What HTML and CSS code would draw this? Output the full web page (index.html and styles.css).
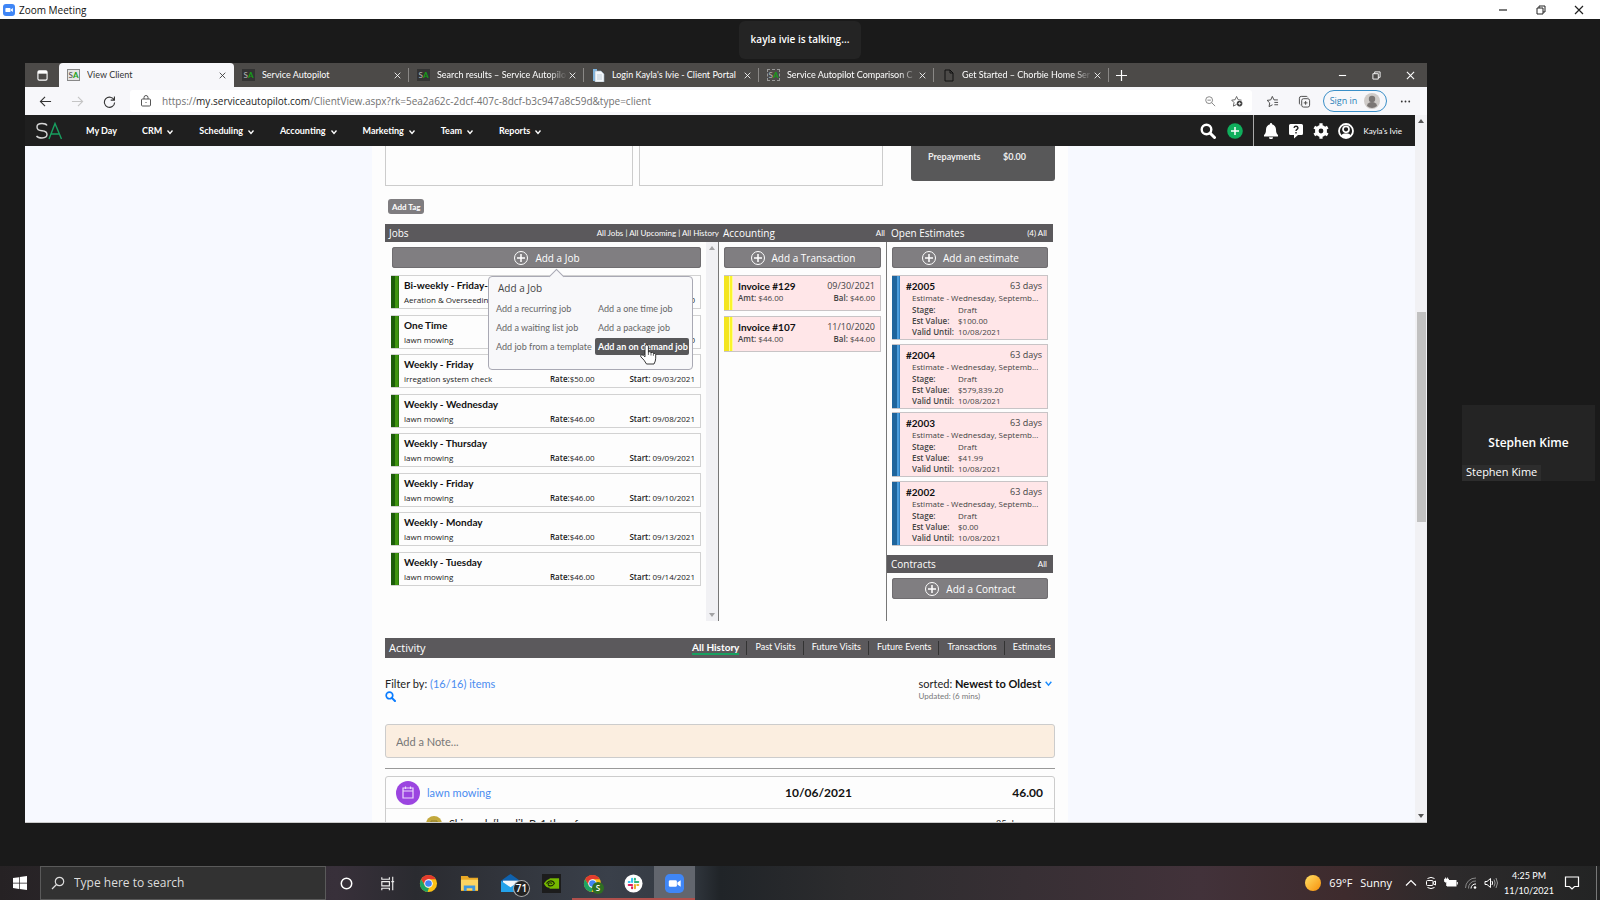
FILE: index.html
```html
<!DOCTYPE html>
<html lang="en">
<head>
<meta charset="utf-8">
<title>Zoom Meeting</title>
<link rel="stylesheet" href="styles.css">
</head>
<body>
<svg class="defs" aria-hidden="true">
  <symbol id="i-close" viewBox="0 0 10 10"><path d="M1 1l8 8M9 1l-8 8" fill="none" stroke="currentColor" stroke-width="1.2"/></symbol>
  <symbol id="i-min" viewBox="0 0 10 10"><path d="M1 5h8" fill="none" stroke="currentColor" stroke-width="1.2"/></symbol>
  <symbol id="i-restore" viewBox="0 0 10 10"><path d="M1 3h6v6H1zM3 3V1h6v6H7" fill="none" stroke="currentColor"/></symbol>
  <symbol id="i-chev" viewBox="0 0 8 8"><path d="M1.500 2.500L4 5.500l2.500-3" fill="none" stroke="currentColor" stroke-width="1.300"/></symbol>
  <symbol id="i-pluscircle" viewBox="0 0 16 16"><circle cx="8" cy="8" r="6.500" fill="none" stroke="currentColor"/><path d="M8 4v8M4 8h8" stroke="currentColor" stroke-width="1.500"/></symbol>
  <symbol id="i-search" viewBox="0 0 16 16"><circle cx="6.500" cy="6.500" r="4.800" fill="none" stroke="currentColor" stroke-width="2.400"/><path d="M10 10l4.500 4.500" stroke="currentColor" stroke-width="3" stroke-linecap="round"/></symbol>
  <symbol id="i-chrome" viewBox="0 0 20 20"><circle cx="10" cy="10" r="9" fill="#fbc116"/><path d="M2.200 5.500A9 9 0 0 1 17.800 5.500H10L6.100 12.200z" fill="#e33b2e"/><path d="M2.200 5.500L6.100 12.200Q8 14.800 10.500 14.500L9 19A9 9 0 0 1 2.200 5.500z" fill="#1da462"/><circle cx="10" cy="10" r="4.500" fill="#fff"/><circle cx="10" cy="10" r="3.500" fill="#4285f4"/></symbol>
  <symbol id="i-zoom" viewBox="0 0 20 20"><rect width="20" height="20" rx="5" fill="#3f86f6"/><rect x="4" y="6.500" width="8.500" height="7" rx="1.500" fill="#fff"/><path d="M13 9l3.500-2.500v7L13 11z" fill="#fff"/></symbol>
</svg>

<header class="titlebar">
  <svg class="s12"><use href="#i-zoom"/></svg>
  <h1>Zoom Meeting</h1>
  <div class="wincontrols">
    <button aria-label="Minimize"><svg><use href="#i-min"/></svg></button>
    <button aria-label="Restore"><svg><use href="#i-restore"/></svg></button>
    <button aria-label="Close"><svg><use href="#i-close"/></svg></button>
  </div>
</header>

<div class="talking"><span>kayla ivie is talking...</span></div>

<div class="meeting">
<main class="browser">
  <div class="tabs">
    <button class="tabmenu" aria-label="Tab actions"><svg viewBox="0 0 12 12"><rect x="1" y="1" width="10" height="10" rx="1.500" fill="none" stroke="#fff" stroke-width="1.200"/><path d="M1 1h10v3H1z" fill="#fff"/></svg></button>
    <div class="tab active"><span class="fav box">S<b>A</b></span><span class="tt">View Client</span><button aria-label="Close tab"><svg><use href="#i-close"/></svg></button></div>
    <div class="tab"><span class="fav">S<b>A</b></span><span class="tt">Service Autopilot</span><button aria-label="Close tab"><svg><use href="#i-close"/></svg></button></div>
    <div class="tab"><span class="fav">S<b>A</b></span><span class="tt fade">Search results – Service Autopilo</span><button aria-label="Close tab"><svg><use href="#i-close"/></svg></button></div>
    <div class="tab"><svg class="favsvg" viewBox="0 0 13 13"><path d="M1 0h4v12H1z" fill="#7fb5e0"/><path d="M3 2h6l3 3v8H3z" fill="#f4f7fa" stroke="#9fb4c6" stroke-width=".6"/><path d="M5 6h5M5 8h5M5 10h5" stroke="#a9bccc" stroke-width=".7"/></svg><span class="tt">Login Kayla's Ivie - Client Portal</span><button aria-label="Close tab"><svg><use href="#i-close"/></svg></button></div>
    <div class="tab"><span class="fav dash">S<b>A</b></span><span class="tt fade">Service Autopilot Comparison C</span><button aria-label="Close tab"><svg><use href="#i-close"/></svg></button></div>
    <div class="tab"><svg class="favsvg" viewBox="0 0 13 13"><path d="M3 1h5l3 3v8H3zM8 1v3h3" fill="none" stroke="#111"/></svg><span class="tt fade">Get Started – Chorbie Home Ser</span><button aria-label="Close tab"><svg><use href="#i-close"/></svg></button></div>
    <button class="newtab" aria-label="New tab"><svg viewBox="0 0 10 10"><path d="M5 0v10M0 5h10" stroke="#fff" stroke-width="1.100"/></svg></button>
    <div class="wincontrols light">
      <button aria-label="Minimize"><svg><use href="#i-min"/></svg></button>
      <button aria-label="Restore"><svg><use href="#i-restore"/></svg></button>
      <button aria-label="Close"><svg><use href="#i-close"/></svg></button>
    </div>
  </div>

  <div class="toolbar">
    <button aria-label="Back"><svg viewBox="0 0 14 14"><path d="M13 7H1.500M6.500 2l-5 5 5 5" fill="none" stroke="#333" stroke-width="1.200"/></svg></button>
    <button aria-label="Forward"><svg viewBox="0 0 14 14"><path d="M1 7h11.500M7.500 2l5 5-5 5" fill="none" stroke="#c5c5c5" stroke-width="1.200"/></svg></button>
    <button aria-label="Refresh"><svg viewBox="0 0 14 14"><path d="M12 5.500A5.500 5.500 0 1 0 12.500 8M12.300 1.500v4h-4" fill="none" stroke="#333" stroke-width="1.200"/></svg></button>
    <div class="address">
      <svg viewBox="0 0 12 12"><rect x="1.500" y="4" width="9" height="7" rx="1" fill="none" stroke="#555"/><path d="M4 4V2.500a2 2 0 0 1 4 0V4M6 7v1" fill="none" stroke="#555"/></svg>
      <span class="url">https://<b>my.serviceautopilot.com</b>/ClientView.aspx?rk=5ea2a62c-2dcf-407c-8dcf-b3c947a8c59d&amp;type=client</span>
      <button aria-label="Zoom out"><svg viewBox="0 0 14 14"><circle cx="6" cy="6" r="4" fill="none" stroke="#777"/><path d="M9 9l4 4M4 6h4" stroke="#777"/></svg></button>
      <button aria-label="Add favorite"><svg viewBox="0 0 14 14"><path d="M6.500 11l-3.700 2 .7-4.200L.8 6l4-.5L6.500 1.700 8.300 5.500l4 .5" fill="none" stroke="#555"/><circle cx="10" cy="10" r="3.300" fill="#444"/><path d="M10 8.200v3.600M8.200 10h3.600" stroke="#fff" stroke-width=".8"/></svg></button>
    </div>
    <button aria-label="Favorites"><svg viewBox="0 0 14 14"><path d="M7 10.500l-3.700 2 .7-4L1.200 5.800l3.900-.5L6.800 1.500l1.800 3.800h4.200M9 8h4M9 10.500h4" fill="none" stroke="#444"/></svg></button>
    <button aria-label="Collections"><svg viewBox="0 0 14 14"><rect x="4" y="4" width="8.500" height="9" rx="2" fill="none" stroke="#444"/><path d="M2.500 10.500A2 2 0 0 1 1.500 9V3.500a2 2 0 0 1 2-2H9a2 2 0 0 1 1.500 1M8.200 6.500v4M6.200 8.500h4" fill="none" stroke="#444"/></svg></button>
    <button class="signin">Sign in<svg viewBox="0 0 16 16"><circle cx="8" cy="8" r="8" fill="#cfcbc8"/><circle cx="8" cy="6" r="3.200" fill="#7b7674"/><path d="M3 13a5 4 0 0 1 10 0q-5 4-10 0z" fill="#7b7674"/></svg></button>
    <button aria-label="Settings and more"><svg viewBox="0 0 14 14"><circle cx="3" cy="7" r="1" fill="#333"/><circle cx="7" cy="7" r="1" fill="#333"/><circle cx="11" cy="7" r="1" fill="#333"/></svg></button>
  </div>

  <div class="viewport">
    <div class="site">
      <nav class="nav">
        <svg class="logo" viewBox="0 0 28 18"><path d="M12 3.500Q11 1.500 7 1.500 2 1.500 2 5T7 8.800Q12 9.200 12 12.500T7 16Q3 16 1.500 14" fill="none" stroke="#d7d7d7" stroke-width="1.400"/><path d="M14 17L20 1.500 26.500 17M16 12h8.500" fill="none" stroke="#18a060" stroke-width="1.400"/></svg>
        <a href="#">My Day</a>
        <a href="#">CRM<svg><use href="#i-chev"/></svg></a>
        <a href="#">Scheduling<svg><use href="#i-chev"/></svg></a>
        <a href="#">Accounting<svg><use href="#i-chev"/></svg></a>
        <a href="#">Marketing<svg><use href="#i-chev"/></svg></a>
        <a href="#">Team<svg><use href="#i-chev"/></svg></a>
        <a href="#">Reports<svg><use href="#i-chev"/></svg></a>
        <div class="actions">
          <button aria-label="Search"><svg><use href="#i-search"/></svg></button>
          <button aria-label="Add"><svg viewBox="0 0 16 16"><circle cx="8" cy="8" r="7.800" fill="#0fae5c"/><path d="M8 4v8M4 8h8" stroke="#fff" stroke-width="1.500"/></svg></button>
        </div>
        <div class="user">
          <button aria-label="Notifications"><svg viewBox="0 0 16 16"><path d="M8 0a1 1 0 0 1 1 1.200C11.500 1.800 13 4 13 6.500c0 3.500 1 4.500 2 5.500v1.500H1V12c1-1 2-2 2-5.500C3 4 4.500 1.800 7 1.200A1 1 0 0 1 8 0zM6 14.300h4a2 2 0 0 1-4 0z" fill="#fff"/></svg></button>
          <button aria-label="Help"><svg viewBox="0 0 16 16"><path d="M2.500 1h11A1.500 1.500 0 0 1 15 2.500v8a1.500 1.500 0 0 1-1.500 1.500H10l-4 3.500V12H2.500A1.500 1.500 0 0 1 1 10.500v-8A1.500 1.500 0 0 1 2.500 1z" fill="#fff"/><path d="M6 4.800q.3-1.500 2-1.500t2 1.500q0 1-1 1.600T8 8M8 9v1.500" fill="none" stroke="#1f1f1f" stroke-width="1.400"/></svg></button>
          <button aria-label="Settings"><svg viewBox="0 0 16 16"><circle cx="8" cy="8" r="4.200" fill="none" stroke="#fff" stroke-width="3.600"/><path d="M8 .3v3M8 12.700v3M1.300 4.200l2.600 1.500M12.100 10.300l2.600 1.500M1.300 11.800l2.600-1.500M12.100 5.700l2.600-1.500" stroke="#fff" stroke-width="3.200"/></svg></button>
          <button aria-label="Account"><svg viewBox="0 0 16 16"><circle cx="8" cy="8" r="7" fill="none" stroke="#fff" stroke-width="1.800"/><circle cx="8" cy="6.300" r="3" fill="none" stroke="#fff" stroke-width="1.700"/><path d="M3 13q1-2.500 3-2.500h4q2 0 3 2.500-5 3.500-10 0z" fill="#fff"/></svg></button>
          <span>Kayla's Ivie</span>
        </div>
      </nav>

      <div class="page">
        <div class="content">
          <div class="summary">
            <div class="box1"></div><div class="box2"></div>
            <div class="balance"><b>Prepayments</b><b>$0.00</b></div>
          </div>
          <button class="tag">Add Tag</button>

          <div class="cols">
            <section class="jobs">
              <header class="bar"><h2>Jobs</h2><span><a href="#">All Jobs</a> | <a href="#">All Upcoming</a> | <a href="#">All History</a></span></header>
              <div class="jobbody">
                <div class="joblist">
                  <div class="addwrap">
                    <button class="add"><svg><use href="#i-pluscircle"/></svg>Add a Job</button>
                    <div class="popup">
                      <h3>Add a Job</h3>
                      <a href="#">Add a recurring job</a><a href="#">Add a one time job</a>
                      <a href="#">Add a waiting list job</a><a href="#">Add a package job</a>
                      <a href="#">Add job from a template</a><a href="#" class="hot">Add an on demand job</a>
                      <svg class="hand" viewBox="0 0 18 22"><path d="M6 13V3.500a1.700 1.700 0 0 1 3.400 0V9q1.600-1 2.600.6 1.600-.8 2.400.8 2-.5 2.300 1.200v3.600q0 2.800-1.700 5.800H7.500Q5.500 17 1.800 13.800q-.8-1.800 1-2 1.600.1 3.200 2z" fill="#fff" stroke="#222" stroke-width=".9"/><path d="M9.400 9v3M12 9.800V12.500M14.400 10.600v2.200" stroke="#222" stroke-width=".7"/></svg>
                    </div>
                  </div>
                  <div class="cards">
                    <article class="job"><h4>Bi-weekly - Friday-</h4><p>Aeration &amp; Overseeding</p><p></p><p>0</p></article>
                    <article class="job"><h4>One Time</h4><p>lawn mowing</p><p></p><p>0</p></article>
                    <article class="job"><h4>Weekly - Friday</h4><p>irregation system check</p><p><b>Rate:</b>$50.00</p><p><b>Start:</b> 09/03/2021</p></article>
                    <article class="job"><h4>Weekly - Wednesday</h4><p>lawn mowing</p><p><b>Rate:</b>$46.00</p><p><b>Start:</b> 09/08/2021</p></article>
                    <article class="job"><h4>Weekly - Thursday</h4><p>lawn mowing</p><p><b>Rate:</b>$46.00</p><p><b>Start:</b> 09/09/2021</p></article>
                    <article class="job"><h4>Weekly - Friday</h4><p>lawn mowing</p><p><b>Rate:</b>$46.00</p><p><b>Start:</b> 09/10/2021</p></article>
                    <article class="job"><h4>Weekly - Monday</h4><p>lawn mowing</p><p><b>Rate:</b>$46.00</p><p><b>Start:</b> 09/13/2021</p></article>
                    <article class="job"><h4>Weekly - Tuesday</h4><p>lawn mowing</p><p><b>Rate:</b>$46.00</p><p><b>Start:</b> 09/14/2021</p></article>
                  </div>
                </div>
                <div class="minibar"><i class="up"></i><i class="down"></i></div>
              </div>
            </section>

            <section class="acct">
              <header class="bar"><h2>Accounting</h2><a href="#">All</a></header>
              <div class="colbody">
                <button class="add"><svg><use href="#i-pluscircle"/></svg>Add a Transaction</button>
                <article class="inv"><h4>Invoice #129</h4><span>09/30/2021</span><p><b>Amt:</b> $46.00</p><p><b>Bal:</b> $46.00</p></article>
                <article class="inv"><h4>Invoice #107</h4><span>11/10/2020</span><p><b>Amt:</b> $44.00</p><p><b>Bal:</b> $44.00</p></article>
              </div>
            </section>

            <section class="ests">
              <header class="bar"><h2>Open Estimates</h2><a href="#">(4) All</a></header>
              <div class="colbody">
                <button class="add"><svg><use href="#i-pluscircle"/></svg>Add an estimate</button>
                <div class="estlist">
                  <article class="est"><h4>#2005</h4><span>63 days</span><p>Estimate - Wednesday, Septemb...</p><dl><dt>Stage:</dt><dd>Draft</dd><dt>Est Value:</dt><dd>$100.00</dd><dt>Valid Until:</dt><dd>10/08/2021</dd></dl></article>
                  <article class="est"><h4>#2004</h4><span>63 days</span><p>Estimate - Wednesday, Septemb...</p><dl><dt>Stage:</dt><dd>Draft</dd><dt>Est Value:</dt><dd>$579,839.20</dd><dt>Valid Until:</dt><dd>10/08/2021</dd></dl></article>
                  <article class="est"><h4>#2003</h4><span>63 days</span><p>Estimate - Wednesday, Septemb...</p><dl><dt>Stage:</dt><dd>Draft</dd><dt>Est Value:</dt><dd>$41.99</dd><dt>Valid Until:</dt><dd>10/08/2021</dd></dl></article>
                  <article class="est"><h4>#2002</h4><span>63 days</span><p>Estimate - Wednesday, Septemb...</p><dl><dt>Stage:</dt><dd>Draft</dd><dt>Est Value:</dt><dd>$0.00</dd><dt>Valid Until:</dt><dd>10/08/2021</dd></dl></article>
                </div>
              </div>
              <header class="bar"><h2>Contracts</h2><a href="#">All</a></header>
              <div class="colbody"><button class="add"><svg><use href="#i-pluscircle"/></svg>Add a Contract</button></div>
            </section>
          </div>

          <section class="activity">
            <header class="bar"><h2>Activity</h2>
              <div class="filters"><a href="#" class="on">All History</a><a href="#">Past Visits</a><a href="#">Future Visits</a><a href="#">Future Events</a><a href="#">Transactions</a><a href="#">Estimates</a></div>
            </header>
            <div class="filterrow">
              <div>Filter by: <a href="#">(16/16) items</a><button aria-label="Search activity"><svg><use href="#i-search"/></svg></button></div>
              <div class="sort">sorted: <b>Newest to Oldest</b><svg><use href="#i-chev"/></svg><small>Updated: (6 mins)</small></div>
            </div>
            <input class="note" type="text" placeholder="Add a Note..." aria-label="Add a Note">
            <hr>
            <div class="entry">
              <div class="entryhead">
                <svg viewBox="0 0 24 24"><circle cx="12" cy="12" r="12" fill="#9b45e0"/><path d="M7 7h10v10H7zM7 10h10M9.500 5.500V8M14.500 5.500V8" fill="none" stroke="#ecd9fb" stroke-width="1.200"/></svg>
                <a href="#">lawn mowing</a><b>10/06/2021</b><b>46.00</b>
              </div>
              <div class="entrybody">
                <svg viewBox="0 0 16 16"><circle cx="8" cy="8" r="8" fill="#c2a83c"/><path d="M5 5h6v7H5zM5 7h6" fill="none" stroke="#8a7a30"/></svg>
                <span>Skipped: [hardik B-1 then f</span><small>35 days ago</small>
              </div>
            </div>
          </section>
        </div>
      </div>
    </div>
    <div class="scrollbar"><i class="up"></i><i class="thumb"></i><i class="down"></i></div>
  </div>
</main>

<aside class="side"><div class="participant"><b>Stephen Kime</b><span>Stephen Kime</span></div></aside>
</div>

<footer class="taskbar">
  <button class="start" aria-label="Start"><svg viewBox="0 0 14 14"><path d="M0 2l6-.8v5.500H0zM6.700 1.100L14 0v6.700H6.700zM0 7.400h6v5.500L0 12zM6.700 7.400H14V14l-7.300-1z" fill="#fff"/></svg></button>
  <label class="search"><svg viewBox="0 0 14 14"><circle cx="8.500" cy="5.500" r="4.200" fill="none" stroke="#ddd" stroke-width="1.200"/><path d="M5.500 8.500L1 13" stroke="#ddd" stroke-width="1.200"/></svg><input type="text" placeholder="Type here to search" aria-label="Type here to search"></label>
  <button aria-label="Cortana"><svg viewBox="0 0 20 20"><circle cx="10" cy="10" r="5.500" fill="none" stroke="#fff" stroke-width="1.600"/></svg></button>
  <button aria-label="Task View"><svg viewBox="0 0 20 20"><path d="M4 3.500v2h8v-2M4 8h8v4.500H4zM4 17v-2h8v2M15.500 3v14M14 8h3" fill="none" stroke="#eee" stroke-width="1.200"/></svg></button>
  <button aria-label="Chrome"><svg><use href="#i-chrome"/></svg></button>
  <button aria-label="File Explorer"><svg viewBox="0 0 20 20"><path d="M1 2h7l1.500 2H19v14H1z" fill="#e9a825"/><path d="M1 6h18v11H1z" fill="#fcd462"/><path d="M4 18v-6h12v6h-3v-3H7v3z" fill="#3f97dd"/></svg></button>
  <button aria-label="Mail"><svg viewBox="0 0 20 20"><path d="M0 7l10-7 10 7v12H0z" fill="#0f62ae"/><path d="M2 7h16v8H2z" fill="#f3f7fb"/><path d="M0 7l10 7 10-7v12H0z" fill="#24a2ea"/></svg><span class="count">71</span></button>
  <button aria-label="NVIDIA"><svg viewBox="0 0 20 20"><path d="M0 0h20v20H0z" fill="#1c1c1c"/><path d="M8 4.500h10v11H8z" fill="#76b900"/><path d="M2 10q4-5.500 8-4.500 4 .8 5 4.500-3 4.500-7 4.500T2 10z" fill="#76b900"/><path d="M4.500 10q3-3.500 6-2.500 2 .7 2.500 2.500-2 3-4.500 2.500T6.500 10q2-1.500 4 0" fill="none" stroke="#1c2a05" stroke-width="1.200"/></svg></button>
  <button class="run" aria-label="Chrome, signed in"><svg><use href="#i-chrome"/></svg><span class="profile">S</span></button>
  <button class="run" aria-label="Slack"><svg viewBox="0 0 20 20"><circle cx="10" cy="10" r="9.500" fill="#fff"/><g stroke-width="2.200" stroke-linecap="round"><path d="M8.500 5v3.500M5 8.500h1" stroke="#36c5f0"/><path d="M11.500 8.500H15M11.500 5v1" stroke="#2eb67d"/><path d="M11.500 11.500V15M15 11.500h-1" stroke="#ecb22e"/><path d="M8.500 11.500H5M8.500 15v-1" stroke="#e01e5a"/></g></svg></button>
  <button class="run current" aria-label="Zoom"><svg><use href="#i-zoom"/></svg></button>
  <div class="tray">
    <button class="weather"><svg viewBox="0 0 16 16"><defs><linearGradient id="sun" x1="0" y1="0" x2="1" y2="1"><stop offset="0" stop-color="#ffe066"/><stop offset="1" stop-color="#f78f0a"/></linearGradient></defs><circle cx="8" cy="8" r="8" fill="url(#sun)"/></svg><span>69°F</span><span>Sunny</span></button>
    <button aria-label="Show hidden icons"><svg viewBox="0 0 14 14"><path d="M2 9.500l5-5 5 5" fill="none" stroke="#fff" stroke-width="1.200"/></svg></button>
    <button aria-label="Meet now"><svg viewBox="0 0 14 14"><rect x="2.500" y="4.500" width="6.500" height="5" rx="1" fill="none" stroke="#fff"/><path d="M9 6.500l2.500-1.500v4L9 7.500M3.500 2.500Q7 .3 10.500 2.500M3.500 11.500Q7 13.700 10.500 11.500" fill="none" stroke="#fff"/></svg></button>
    <button aria-label="Battery"><svg viewBox="0 0 14 14"><path d="M3 4h9.500v6.500H3z" fill="#fff"/><path d="M13.300 6v2.500" stroke="#fff"/><path d="M.5 3h4v2.500q-2 2-4 0zM1.500 3V1.500M3.500 3V1.500M2.500 7v3" fill="#fff" stroke="#fff" stroke-width=".8"/></svg></button>
    <button aria-label="Network"><svg viewBox="0 0 14 14"><path d="M1.500 12A10 10 0 0 1 12 2M4.500 12.500A7 7 0 0 1 12 5" fill="none" stroke="#888"/><path d="M7 12.500a4.500 4.500 0 0 1 5-4.500" fill="none" stroke="#fff"/><circle cx="11" cy="11.500" r="1.300" fill="#fff"/></svg></button>
    <button aria-label="Volume"><svg viewBox="0 0 14 14"><path d="M1 5.500h2L6.500 2.500v9L3 8.500H1z" fill="none" stroke="#fff"/><path d="M8 5q1.200 2 0 4" fill="none" stroke="#fff"/><path d="M10 3.500q2.200 3.500 0 7M12 2q3 5 0 10" fill="none" stroke="#999"/></svg></button>
    <div class="clock"><time>4:25 PM</time><time>11/10/2021</time></div>
    <button class="notif" aria-label="Notifications"><svg viewBox="0 0 16 16"><path d="M1.500 2h13v9.500H10.500L8 14l-2.500-2.500h-4z" fill="none" stroke="#fff" stroke-width="1.200"/></svg></button>
  </div>
</footer>
</body>
</html>
```
FILE: styles.css
```css
* { box-sizing: border-box; }
body {
  margin: 0;
  height: 100vh;
  overflow: hidden;
  display: flex;
  flex-direction: column;
  background: #1a1a1a;
  color: #222;
  font: 11px/14px "Open Sans", "Noto Sans", sans-serif;
}
button, input { font: inherit; color: inherit; border: 0; padding: 0; margin: 0; background: none; }
button { display: flex; align-items: center; justify-content: center; }
h1, h2, h3, h4, p, dl, dd { margin: 0; font-size: inherit; font-weight: 400; }
a { color: inherit; text-decoration: none; }
svg { flex: none; display: block; }
.defs { position: absolute; width: 0; height: 0; }

/* Outer window */
.titlebar { flex: none; display: flex; align-items: center; height: 19px; padding-left: 3px; gap: 4px; background: #fff; color: #111; }
.s12 { width: 12px; height: 12px; }
.titlebar h1 { flex: 1; font-size: 10px; }
.wincontrols { display: flex; align-items: center; color: #222; }
.wincontrols button { width: 38px; }
.wincontrols svg { width: 10px; height: 10px; }
.titlebar .wincontrols { padding-right: 2px; }
.talking { flex: none; display: flex; justify-content: center; height: 44px; padding-top: 2px; color: #fff; font: 600 10px/14px "Open Sans", sans-serif; }
.talking span { height: 38px; padding: 11px 12px; border-radius: 6px; background: #242424; }
.meeting { flex: 1; min-height: 0; display: flex; padding: 0 5px 43px 25px; }
.browser { flex: 1; min-width: 0; display: flex; flex-direction: column; background: #fff; border-bottom: 1px solid #ccc; }
.side { flex: none; display: flex; align-items: center; width: 168px; padding-left: 35px; }
.participant { flex: 1; display: flex; flex-direction: column; height: 76px; background: #242424; color: #fff; font-size: 11px; }
.participant b { flex: 1; padding-top: 31px; text-align: center; font-size: 12px; font-weight: 600; }
.participant span { align-self: flex-start; padding: 0 4px 2px; background: #2d2d2d; }

/* Browser chrome */
.tabs { flex: none; display: flex; align-items: stretch; height: 24px; background: #4c4a48; color: #fff; font: 9px/14px Lato, sans-serif; }
.tabmenu { width: 34px; }
.tabmenu svg { width: 11px; height: 11px; }
.tab { display: flex; align-items: center; width: 175px; padding: 0 6px 0 8px; border-radius: 4px 4px 0 0; }
.tab.active { background: #f7f7fa; color: #333; }
.tab + .tab:not(.active) { background: linear-gradient(#8a8886, #8a8886) right center / 1px 14px no-repeat; }
.tab .tt { flex: 1; min-width: 0; margin-left: 7px; overflow: hidden; white-space: nowrap; }
.tab .fade { -webkit-mask-image: linear-gradient(90deg, #000 86%, transparent); mask-image: linear-gradient(90deg, #000 86%, transparent); }
.tab button { width: 11px; }
.tab button svg { width: 7px; height: 7px; }
.fav { width: 13px; height: 12px; line-height: 12px; text-align: center; font-size: 8px; color: #bbb; background: #333; }
.fav b { color: #16a016; }
.fav.box { background: #e4e4e4; color: #444; outline: 1px solid #888; outline-offset: -1px; }
.fav.dash { background: none; outline: 1px dashed #999; outline-offset: -1px; }
.favsvg { width: 13px; height: 13px; }
.newtab { width: 24px; }
.newtab svg { width: 11px; height: 11px; }
.tabs .wincontrols { margin-left: auto; color: #fff; }
.tabs .wincontrols button { width: 34px; }
.tabs .wincontrols svg { width: 9px; height: 9px; }
.toolbar { flex: none; display: flex; align-items: center; height: 28px; padding: 0 6px 0 4px; background: #f7f7fa; }
.toolbar > button { width: 32px; }
.toolbar svg { width: 13px; height: 13px; }
.address { flex: 1; min-width: 0; display: flex; align-items: center; height: 22px; margin: 0 4px 0 5px; padding: 0 7px 0 10px; gap: 10px; border-radius: 3px; background: #fff; }
.address svg { width: 12px; height: 12px; }
.url { flex: 1; min-width: 0; overflow: hidden; white-space: nowrap; color: #717171; font-size: 10px; }
.url b { font-weight: 400; color: #222; }
.address button { width: 17px; }
.toolbar .signin { width: 64px; height: 22px; margin: 0 2px 0 3px; gap: 7px; border: 1px solid #3a8fc8; border-radius: 11px; color: #2a7fb8; font-size: 9px; }
.signin svg { width: 16px; height: 16px; }

/* Site */
.viewport { flex: 1; min-height: 0; display: flex; background: #f1f1f4; }
.site { flex: 1; min-width: 0; display: flex; flex-direction: column; }
.scrollbar, .minibar { flex: none; display: flex; flex-direction: column; align-items: center; width: 12px; padding: 4px 0; }
.up, .down { width: 0; height: 0; border: 3px solid transparent; }
.up { border-top: 0; border-bottom: 4px solid #555; }
.down { margin-top: auto; border-bottom: 0; border-top: 4px solid #555; }
.thumb { width: 9px; height: 210px; margin-top: 189px; background: #c1c1c1; }
.nav { flex: none; display: flex; align-items: center; height: 31px; padding: 0 13px 0 10px; gap: 25px; background: #1f1f1f; color: #fff; font: 700 9px/14px Lato, sans-serif; }
.nav > a { display: flex; align-items: center; gap: 4px; }
.nav > a svg { width: 8px; height: 8px; margin-top: 2px; }
.logo { width: 28px; height: 18px; margin-right: -2px; }
.actions { display: flex; gap: 11px; margin-left: auto; }
.actions svg, .user svg { width: 16px; height: 16px; }
.user { display: flex; align-items: center; height: 31px; margin-left: -15px; padding-left: 9px; gap: 9px; border-left: 1px solid #aaa; font-size: 8px; font-weight: 400; }
.page { flex: 1; min-height: 0; overflow: hidden; padding: 0 12px; background: #f7f9ff; }
.content { max-width: 696px; min-height: 100%; margin: 0 auto; padding: 0 13px; background: #fdfdfd; }
.summary { display: grid; grid-template-columns: 248fr 6px 244fr 28px 144fr; align-items: start; height: 53px; }
.box1, .box2 { height: 40px; border: 1px solid #ccc; border-top: 0; }
.box2 { grid-column: 3; }
.balance { grid-column: 5; display: flex; justify-content: space-between; height: 35px; padding: 4px 29px 0 17px; border-radius: 0 0 3px 3px; background: #585859; color: #eee; font: 9px/14px Lato, sans-serif; }
.balance b { font-weight: 700; }
.tag { height: 15px; margin: 0 0 10px 3px; padding: 0 4px; border-radius: 3px; background: #7f7d80; color: #fff; font: 700 8px/12px Lato, sans-serif; }

.bar { display: flex; align-items: center; justify-content: space-between; height: 18px; padding: 0 6px 0 4px; background: #5b595c; color: #fff; font: 8px/14px Lato, sans-serif; white-space: nowrap; }
.bar h2 { font: 10px/14px "Open Sans", sans-serif; }
.cols { display: grid; grid-template-columns: 334fr 168fr 166fr; height: 397px; margin-right: 2px; }
.jobs, .acct { display: flex; flex-direction: column; min-width: 0; }
.jobs { border-right: 1px solid #777; }
.acct { border-right: 1px solid #777; }
.jobs .bar { padding-right: 0; margin-right: -1px; }
.acct .bar { padding-right: 2px; margin-right: -1px; }
.jobbody { flex: 1; display: flex; }
.joblist { flex: 1; min-width: 0; padding: 5px 5px 0 6px; }
.minibar { background: #f1f1f4; }
.minibar i { opacity: .5; }
.add { width: 100%; height: 21px; gap: 6px; border-radius: 3px; background: #807e81; color: #fff; font-size: 10px; box-shadow: inset 0 0 0 1px #6f6d70; }
.add svg { width: 16px; height: 16px; }
.addwrap { position: relative; padding: 0 0 0 1px; }
.popup { position: absolute; z-index: 2; top: 29px; left: 97px; width: 205px; height: 94px; padding: 1px 3px 0 4px; display: grid; grid-template-columns: 102px 94px; grid-template-rows: 20px 21px 17px 20px; align-items: center; border: 1px solid #a9a9b4; border-radius: 4px; background: #f8f8fa; color: #666; font: 9px/14px Lato, sans-serif; white-space: nowrap; }
.popup::before { content: ""; position: absolute; top: -6px; left: 62px; width: 10px; height: 10px; transform: rotate(45deg); border: solid #a9a9b4; border-width: 1px 0 0 1px; background: #f8f8fa; }
.popup h3 { grid-column: 1 / -1; padding-left: 5px; font: 10px/14px "Open Sans", sans-serif; color: #444; }
.popup a { padding-left: 3px; line-height: 17px; }
.popup .hot { border-radius: 2px; background: #58585a; color: #fff; font-weight: 700; }
.hand { position: absolute; left: 150px; top: 66px; width: 18px; height: 22px; }
.cards { display: flex; flex-direction: column; justify-content: space-between; height: 311px; margin-top: 7px; }
.job { display: grid; grid-template-columns: 1fr 75px 70px; align-content: center; height: 34px; padding: 0 5px 0 13px; border: 1px solid #d2d2d2; border-left: 0; background: linear-gradient(90deg, #1c5c0a 4px, #3f9410 4px 7px, #2c7a0e 7px) left / 8px 100% no-repeat; font-size: 8px; line-height: 14px; white-space: nowrap; }
.job h4 { grid-column: 1 / -1; font: 700 10px/16px Lato, sans-serif; color: #111; }
.job p:last-child { text-align: right; }
.job b, .inv b, .est dt { font-weight: 600; }
.colbody { padding: 5px 5px 0; }
.inv, .est { color: #444; white-space: nowrap; }
.inv { display: grid; grid-template-columns: 1fr auto; align-content: center; height: 36px; margin-top: 5px; padding: 0 5px 2px 14px; border: 1px solid #c8c4c6; border-left: 0; background: linear-gradient(90deg, #f3e51f 5px, #fdfc9a 5px 6px, #fbf42c 6px 8px, #fdfc9a 8px) left / 9px 100% no-repeat #ffe6e8; font-size: 8px; line-height: 12px; }
.add + .inv, .add + .estlist { margin-top: 7px; }
.inv h4, .est h4 { font: 700 10px/12px Lato, sans-serif; color: #111; }
.inv > span, .est > span { font-size: 9px; text-align: right; }
.inv p:last-child { text-align: right; }
.estlist { display: flex; flex-direction: column; justify-content: space-between; height: 271px; }
.est { display: grid; grid-template-columns: 1fr auto; align-content: start; height: 65px; padding: 4px 5px 0 14px; border: 1px solid #c8c4c6; border-left: 0; background: linear-gradient(90deg, #1f659d 5px, #4a9ddd 5px 7px, #2f7fbf 7px) left / 8px 100% no-repeat #ffe6e8; font-size: 8px; line-height: 12px; }
.est p { grid-column: 1 / -1; padding-left: 6px; line-height: 12px; }
.est dl { grid-column: 1 / -1; display: grid; grid-template-columns: 46px 1fr; padding-left: 6px; line-height: 11px; }
.ests .bar ~ .bar { margin-top: 9px; }

.activity .bar { height: 20px; margin-top: 17px; padding-right: 4px; }
.activity .bar h2 { font-size: 11px; }
.filters { display: flex; font-size: 9px; }
.filters a { line-height: 12px; }
.filters a + a { margin-left: 7px; padding-left: 8px; border-left: 1px solid #333; }
.filters .on { font-size: 10px; font-weight: 700; border-bottom: 2px solid #18a060; }
.filterrow { display: flex; justify-content: space-between; height: 66px; padding: 19px 2px 0 0; font: 11px/14px Lato, sans-serif; }
.filterrow a { color: #4a8cf0; }
.filterrow button svg { width: 11px; height: 11px; color: #0a7cff; }
.sort b { color: #111; font-weight: 700; }
.sort svg { display: inline-block; width: 9px; height: 9px; margin-left: 3px; color: #1a8cff; }
.sort small { display: block; font-size: 8px; line-height: 10px; color: #777; }
.note { display: block; width: 100%; height: 34px; padding: 0 10px; border: 1px solid #ccc; border-radius: 3px; background: #fbeee0; font: 11px/14px Lato, sans-serif; }
.note::placeholder { color: #777; opacity: 1; }
.activity hr { margin: 10px 0 7px; border: 0; border-top: 1px solid #999; }
.entry { border: 1px solid #ccc; border-radius: 3px; font: 11px/14px Lato, sans-serif; }
.entryhead { display: grid; grid-template-columns: 24px 365px 1fr auto; align-items: center; height: 32px; padding: 0 11px 0 10px; border-bottom: 1px solid #ddd; color: #111; font-size: 12px; }
.entryhead svg { width: 24px; height: 24px; }
.entryhead a { padding-left: 7px; font-size: 11px; color: #4a8cf0; }
.entrybody { display: flex; align-items: center; height: 30px; padding: 0 11px 0 40px; gap: 7px; }
.entrybody svg { width: 16px; height: 16px; }
.entrybody small { margin-left: auto; font-size: 9px; }

/* Taskbar */
.taskbar { flex: none; display: flex; align-items: stretch; height: 34px; background: linear-gradient(90deg, #262224, #38303a 21%, #2a2b30 26%, #3a404a 38%, #343a42 43%, #202428 45%, #2c2c2e 53%, #42323a 75%, #3e2b2d 84%, #2c2a2b 91%, #232424); color: #fff; font-size: 12px; }
.taskbar > button { position: relative; width: 41px; }
.taskbar > button svg { width: 19px; height: 19px; }
.taskbar .start { width: 40px; }
.taskbar .start svg { width: 14px; height: 14px; }
.search { display: flex; align-items: center; width: 286px; padding-left: 10px; gap: 9px; border: 1px solid #5a5a5a; background: #323232; }
.search svg { width: 14px; height: 14px; }
.search input { flex: 1; min-width: 0; }
.search input::placeholder { color: #ddd; opacity: 1; }
.run { box-shadow: inset 0 -2px #b0504c; }
.taskbar .current { background: #62666e; }
.count, .profile { position: absolute; right: 2px; bottom: 4px; width: 15px; height: 15px; border-radius: 50%; background: #222; box-shadow: 0 0 0 1px #aaa; font-size: 10px; line-height: 15px; font-weight: 600; text-align: center; }
.profile { right: 9px; bottom: 6px; width: 12px; height: 12px; background: #2f6f22; box-shadow: none; font-size: 8px; line-height: 12px; }
.tray { flex: 1; display: flex; align-items: center; justify-content: flex-end; margin-right: 3px; border-right: 1px solid #777; }
.tray > button { width: 20px; }
.tray svg { width: 14px; height: 14px; }
.tray .weather { width: auto; gap: 8px; margin-right: 9px; font-size: 11px; }
.weather svg { width: 16px; height: 16px; }
.clock { display: flex; flex-direction: column; padding: 0 2px 0 3px; text-align: center; font: 9px/15px Lato, sans-serif; }
.tray .notif { width: 32px; margin-right: 8px; }
.notif svg { width: 16px; height: 16px; }
```
